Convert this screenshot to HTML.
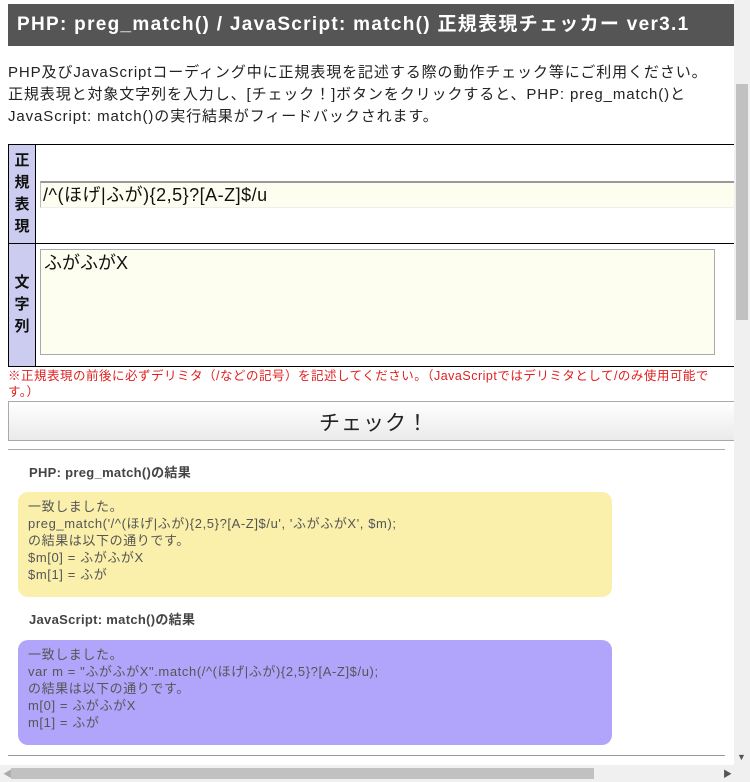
<!DOCTYPE html>
<html><head><meta charset="utf-8"><style>
body{margin:0;width:750px;height:782px;overflow:hidden;background:#fff;font-family:"Liberation Sans","Noto Sans CJK JP",sans-serif;position:relative}
.a{position:absolute}
.t{left:8px;top:4px;width:726px;height:42px;background:#555;color:#fff;font-weight:bold;font-size:19px;letter-spacing:1.3px;line-height:42px;text-indent:9px;white-space:nowrap;overflow:hidden}
.d{left:8px;top:62px;font-size:15px;letter-spacing:0.9px;line-height:22px;color:#222;white-space:nowrap}
.lab{left:8px;width:26px;background:#ccccf0;border:1px solid #000;color:#111;font-weight:bold;font-size:15px;text-align:center;line-height:22px;display:flex;align-items:center;justify-content:center}
.hl{height:1px;background:#000;left:8px;width:726px}
.box{left:18px;width:574px;border-radius:10px;padding:6px 10px;font-size:13px;letter-spacing:0.6px;line-height:17px;color:#555;white-space:nowrap}
.h{left:29px;font-size:13px;letter-spacing:0.3px;font-weight:bold;color:#444}
</style></head><body>
<div class="a t">PHP: preg_match() / JavaScript: match() 正規表現チェッカー ver3.1</div>
<div class="a d">PHP及びJavaScriptコーディング中に正規表現を記述する際の動作チェック等にご利用ください。<br>正規表現と対象文字列を入力し、[チェック！]ボタンをクリックすると、PHP: preg_match()と<br>JavaScript: match()の実行結果がフィードバックされます。</div>
<div class="a hl" style="top:144px"></div>
<div class="a hl" style="top:243px"></div>
<div class="a hl" style="top:366px"></div>
<div class="a lab" style="top:144px;height:98px">正<br>規<br>表<br>現</div>
<div class="a lab" style="top:243px;height:122px">文<br>字<br>列</div>
<div class="a" style="left:40px;top:181px;width:700px;height:24px;background:#fefef0;border-top:2px solid #999;border-left:1px solid #bbb;border-bottom:1px solid #eee;font-size:18px;letter-spacing:0.5px;line-height:24px;color:#111;padding-left:2px">/^(ほげ|ふが){2,5}?[A-Z]$/u</div>
<div class="a" style="left:40px;top:249px;width:670px;height:104px;background:#fefef0;border:1px solid #aaa;font-size:18px;line-height:26px;color:#111;padding-left:3px">ふがふがX</div>
<div class="a" style="left:8px;top:368px;white-space:nowrap;font-size:12.5px;letter-spacing:0.5px;line-height:16px;color:#e02020">※正規表現の前後に必ずデリミタ（/などの記号）を記述してください。（JavaScriptではデリミタとして/のみ使用可能で<br>す。）</div>
<div class="a" style="left:8px;top:401px;width:740px;height:38px;border:1px solid #aaa;background:linear-gradient(#fff,#eaeaea);font-size:21px;letter-spacing:1px;line-height:44px;text-align:center;color:#222;text-indent:-10px">チェック！</div>
<div class="a" style="left:8px;top:449px;width:717px;height:1px;background:#aaa"></div>
<div class="a h" style="top:462px">PHP: preg_match()の結果</div>
<div class="a box" style="top:492px;height:93px;background:#faefab">一致しました。<br>preg_match('/^(ほげ|ふが){2,5}?[A-Z]$/u', 'ふがふがX', $m);<br>の結果は以下の通りです。<br>$m[0] = ふがふがX<br>$m[1] = ふが</div>
<div class="a h" style="top:609px">JavaScript: match()の結果</div>
<div class="a box" style="top:640px;height:93px;background:#b1a5fb">一致しました。<br>var m = "ふがふがX".match(/^(ほげ|ふが){2,5}?[A-Z]$/u);<br>の結果は以下の通りです。<br>m[0] = ふがふがX<br>m[1] = ふが</div>
<div class="a" style="left:8px;top:755px;width:717px;height:1px;background:#999"></div>
<div class="a" style="left:734px;top:0;width:16px;height:782px;background:#f0f0f0"></div>
<div class="a" style="left:736px;top:84px;width:12px;height:236px;background:#c1c1c1"></div>
<div class="a" style="left:0;top:765px;width:734px;height:17px;background:#f0f0f0"></div>
<div class="a" style="left:11px;top:768px;width:583px;height:11px;background:#c1c1c1"></div>
<div class="a" style="left:737px;top:752px;font-size:9px;color:#555">▼</div>
<div class="a" style="left:3px;top:767px;font-size:9px;color:#aaa">◀</div>
<div class="a" style="left:723px;top:767px;font-size:9px;color:#555">▶</div>
</body></html>
